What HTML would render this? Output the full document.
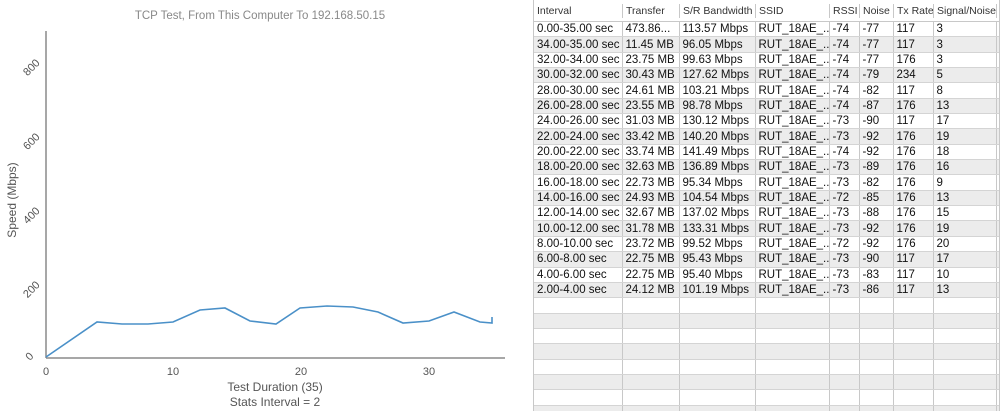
<!DOCTYPE html>
<html><head><style>
body{margin:0;width:1000px;height:411px;background:#fff;overflow:hidden;position:relative;font-family:"Liberation Sans",Arial,sans-serif}
#wrap{position:absolute;left:533px;top:0;width:465px;height:411px;border-left:1px solid #c8c8c8;border-right:1px solid #c8c8c8;overflow:hidden}
table{border-collapse:collapse;table-layout:fixed;width:465px}
th{height:21px;font-weight:normal;font-size:10.5px;color:#333;text-align:left;padding:0 0 0 3px;border-bottom:1px solid #c8c8c8;white-space:nowrap;overflow:hidden}
th span{display:block;border-left:1px solid #c8c8c8;padding-left:3px;margin-left:-3px;line-height:14px}
th:first-child span{border-left:none}
td{height:13.35px;padding:1px 0 0 3px;font-size:11.5px;line-height:13px;color:#111;border-left:1px solid #c8c8c8;border-bottom:1px solid #d4d4d4;white-space:nowrap;overflow:hidden}
td:first-child{border-left:none}
tr.g td{background:#ececec}
</style></head><body>
<svg width="530" height="411" style="position:absolute;left:0;top:0" font-family="Liberation Sans, Arial, sans-serif">
<text x="260" y="19" font-size="11.5" fill="#888" text-anchor="middle">TCP Test,  From This Computer To 192.168.50.15</text>
<line x1="46" y1="31" x2="46" y2="358" stroke="#8a8a8a" stroke-width="1.5"/>
<line x1="46" y1="358" x2="505" y2="358" stroke="#8a8a8a" stroke-width="1.5"/>
<g font-size="11" fill="#555" text-anchor="middle">
<text transform="translate(34,70) rotate(-45)">800</text>
<text transform="translate(34,144) rotate(-45)">600</text>
<text transform="translate(34,218) rotate(-45)">400</text>
<text transform="translate(34,292) rotate(-45)">200</text>
<text transform="translate(32,359) rotate(-45)">0</text>
<text x="46" y="375">0</text><text x="173" y="375">10</text><text x="301" y="375">20</text><text x="429" y="375">30</text>
</g>
<text transform="translate(16,200) rotate(-90)" font-size="12" fill="#555" text-anchor="middle">Speed (Mbps)</text>
<text x="275" y="391" font-size="12" fill="#555" text-anchor="middle">Test Duration (35)</text>
<text x="275" y="406" font-size="12" fill="#555" text-anchor="middle">Stats Interval = 2</text>
<polyline fill="none" stroke="#4a90c8" stroke-width="1.6" points="46,357 97,322 122,324 148,324 173,322 200,310 225,308 250,321 276,324 300,308 327,306 353,307 378,312 403,323 429,321 454,312 480,322 492,323 492,317"/>
</svg>
<div id="wrap">
<table>
<colgroup><col style="width:88px"><col style="width:57px"><col style="width:76px"><col style="width:74px"><col style="width:30px"><col style="width:34px"><col style="width:40px"><col style="width:63px"><col></colgroup>
<tr><th><span>Interval</span></th><th><span>Transfer</span></th><th><span>S/R Bandwidth</span></th><th><span>SSID</span></th><th><span>RSSI</span></th><th><span>Noise</span></th><th><span>Tx Rate</span></th><th><span>Signal/Noise</span></th><th><span>&nbsp;</span></th></tr>
<tr><td>0.00-35.00 sec</td><td>473.86...</td><td>113.57 Mbps</td><td>RUT_18AE_...</td><td>-74</td><td>-77</td><td>117</td><td>3</td><td></td></tr>
<tr class="g"><td>34.00-35.00 sec</td><td>11.45 MB</td><td>96.05 Mbps</td><td>RUT_18AE_...</td><td>-74</td><td>-77</td><td>117</td><td>3</td><td></td></tr>
<tr><td>32.00-34.00 sec</td><td>23.75 MB</td><td>99.63 Mbps</td><td>RUT_18AE_...</td><td>-74</td><td>-77</td><td>176</td><td>3</td><td></td></tr>
<tr class="g"><td>30.00-32.00 sec</td><td>30.43 MB</td><td>127.62 Mbps</td><td>RUT_18AE_...</td><td>-74</td><td>-79</td><td>234</td><td>5</td><td></td></tr>
<tr><td>28.00-30.00 sec</td><td>24.61 MB</td><td>103.21 Mbps</td><td>RUT_18AE_...</td><td>-74</td><td>-82</td><td>117</td><td>8</td><td></td></tr>
<tr class="g"><td>26.00-28.00 sec</td><td>23.55 MB</td><td>98.78 Mbps</td><td>RUT_18AE_...</td><td>-74</td><td>-87</td><td>176</td><td>13</td><td></td></tr>
<tr><td>24.00-26.00 sec</td><td>31.03 MB</td><td>130.12 Mbps</td><td>RUT_18AE_...</td><td>-73</td><td>-90</td><td>117</td><td>17</td><td></td></tr>
<tr class="g"><td>22.00-24.00 sec</td><td>33.42 MB</td><td>140.20 Mbps</td><td>RUT_18AE_...</td><td>-73</td><td>-92</td><td>176</td><td>19</td><td></td></tr>
<tr><td>20.00-22.00 sec</td><td>33.74 MB</td><td>141.49 Mbps</td><td>RUT_18AE_...</td><td>-74</td><td>-92</td><td>176</td><td>18</td><td></td></tr>
<tr class="g"><td>18.00-20.00 sec</td><td>32.63 MB</td><td>136.89 Mbps</td><td>RUT_18AE_...</td><td>-73</td><td>-89</td><td>176</td><td>16</td><td></td></tr>
<tr><td>16.00-18.00 sec</td><td>22.73 MB</td><td>95.34 Mbps</td><td>RUT_18AE_...</td><td>-73</td><td>-82</td><td>176</td><td>9</td><td></td></tr>
<tr class="g"><td>14.00-16.00 sec</td><td>24.93 MB</td><td>104.54 Mbps</td><td>RUT_18AE_...</td><td>-72</td><td>-85</td><td>176</td><td>13</td><td></td></tr>
<tr><td>12.00-14.00 sec</td><td>32.67 MB</td><td>137.02 Mbps</td><td>RUT_18AE_...</td><td>-73</td><td>-88</td><td>176</td><td>15</td><td></td></tr>
<tr class="g"><td>10.00-12.00 sec</td><td>31.78 MB</td><td>133.31 Mbps</td><td>RUT_18AE_...</td><td>-73</td><td>-92</td><td>176</td><td>19</td><td></td></tr>
<tr><td>8.00-10.00 sec</td><td>23.72 MB</td><td>99.52 Mbps</td><td>RUT_18AE_...</td><td>-72</td><td>-92</td><td>176</td><td>20</td><td></td></tr>
<tr class="g"><td>6.00-8.00 sec</td><td>22.75 MB</td><td>95.43 Mbps</td><td>RUT_18AE_...</td><td>-73</td><td>-90</td><td>117</td><td>17</td><td></td></tr>
<tr><td>4.00-6.00 sec</td><td>22.75 MB</td><td>95.40 Mbps</td><td>RUT_18AE_...</td><td>-73</td><td>-83</td><td>117</td><td>10</td><td></td></tr>
<tr class="g"><td>2.00-4.00 sec</td><td>24.12 MB</td><td>101.19 Mbps</td><td>RUT_18AE_...</td><td>-73</td><td>-86</td><td>117</td><td>13</td><td></td></tr>
<tr><td></td><td></td><td></td><td></td><td></td><td></td><td></td><td></td><td></td></tr>
<tr class="g"><td></td><td></td><td></td><td></td><td></td><td></td><td></td><td></td><td></td></tr>
<tr><td></td><td></td><td></td><td></td><td></td><td></td><td></td><td></td><td></td></tr>
<tr class="g"><td></td><td></td><td></td><td></td><td></td><td></td><td></td><td></td><td></td></tr>
<tr><td></td><td></td><td></td><td></td><td></td><td></td><td></td><td></td><td></td></tr>
<tr class="g"><td></td><td></td><td></td><td></td><td></td><td></td><td></td><td></td><td></td></tr>
<tr><td></td><td></td><td></td><td></td><td></td><td></td><td></td><td></td><td></td></tr>
<tr class="g"><td></td><td></td><td></td><td></td><td></td><td></td><td></td><td></td><td></td></tr>
</table>
</div>
</body></html>
